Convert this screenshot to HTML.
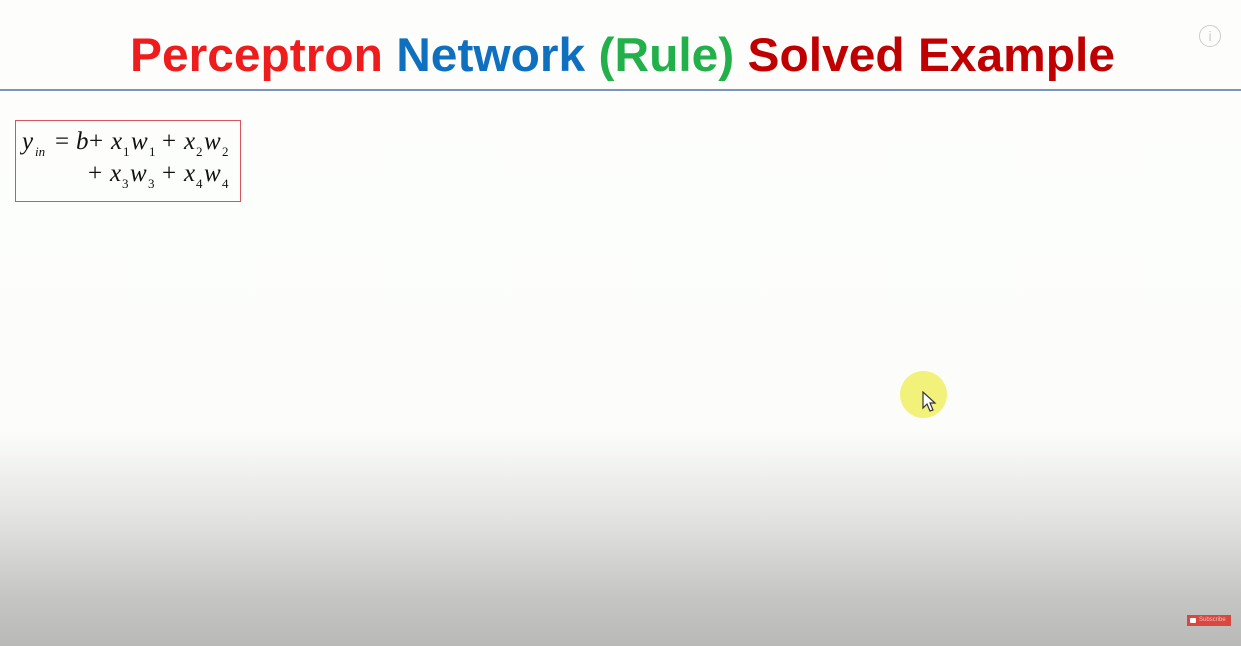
<!DOCTYPE html>
<html><head><style>
html,body{margin:0;padding:0;width:1241px;height:646px;overflow:hidden}
body{background:linear-gradient(to bottom,#fdfefc 0,#fcfdfb 430px,#e2e3e1 520px,#c4c5c3 600px,#b9bab8 646px);position:relative;font-family:"Liberation Sans",sans-serif}
.line{position:absolute;left:0;top:89px;width:1241px;height:2px;background:#7d93c2}
.box{position:absolute;left:15px;top:120px;width:226px;height:82px;border:1.5px solid #d9545e;box-sizing:border-box}
.info{position:absolute;left:1199px;top:25px;width:22px;height:22px;border:1px solid #ccc;border-radius:50%;box-sizing:border-box;color:#ccc;font-size:14px;text-align:center;line-height:20px}
.cursor{position:absolute;left:900px;top:371px;width:47px;height:47px;border-radius:50%;background:#f2f27a}
.sub{position:absolute;left:1187px;top:615px;width:44px;height:11px;background:#d9473f;color:#f5c0bb;font-size:6px;line-height:11px;padding-left:12px;box-sizing:border-box}
.sub:before{content:"";position:absolute;left:3px;top:3px;width:6px;height:5px;background:#fff;border-radius:1px}
</style></head><body>
<svg width="1241" height="100" style="position:absolute;left:0;top:0">
<text x="130" y="71" font-family="Liberation Sans,sans-serif" font-weight="bold" font-size="47" textLength="985" lengthAdjust="spacingAndGlyphs"><tspan fill="#ee1c1c">Perceptron </tspan><tspan fill="#1070c0">Network </tspan><tspan fill="#22b04a">(Rule) </tspan><tspan fill="#c00000">Solved Example</tspan></text>
</svg>
<div class="line"></div>
<div class="info">i</div>
<div class="box"></div>
<svg width="260" height="210" style="position:absolute;left:0;top:0" font-family="Liberation Serif,serif" font-style="italic" font-size="25" fill="#111">
<text x="22" y="149">y</text><text x="35" y="156" font-size="13">in</text>
<text x="55" y="149" font-style="normal">=</text><text x="76" y="149">b</text>
<text x="89" y="149" font-style="normal">+</text><text x="111" y="149">x</text><text x="123" y="156" font-size="13" font-style="normal">1</text>
<text x="131" y="149">w</text><text x="149" y="156" font-size="13" font-style="normal">1</text>
<text x="162" y="149" font-style="normal">+</text><text x="184" y="149">x</text><text x="196" y="156" font-size="13" font-style="normal">2</text>
<text x="204" y="149">w</text><text x="222" y="156" font-size="13" font-style="normal">2</text>
<text x="88" y="181" font-style="normal">+</text><text x="110" y="181">x</text><text x="122" y="188" font-size="13" font-style="normal">3</text>
<text x="130" y="181">w</text><text x="148" y="188" font-size="13" font-style="normal">3</text>
<text x="162" y="181" font-style="normal">+</text><text x="184" y="181">x</text><text x="196" y="188" font-size="13" font-style="normal">4</text>
<text x="204" y="181">w</text><text x="222" y="188" font-size="13" font-style="normal">4</text>
</svg>
<div class="cursor"></div>
<svg width="20" height="22" style="position:absolute;left:921px;top:391px"><path d="M2 1 L2 17 L6 13 L9 20 L12 19 L9 12 L14 12 Z" fill="#fff" stroke="#333" stroke-width="1.2"/></svg>
<div class="sub">Subscribe</div>
</body></html>
